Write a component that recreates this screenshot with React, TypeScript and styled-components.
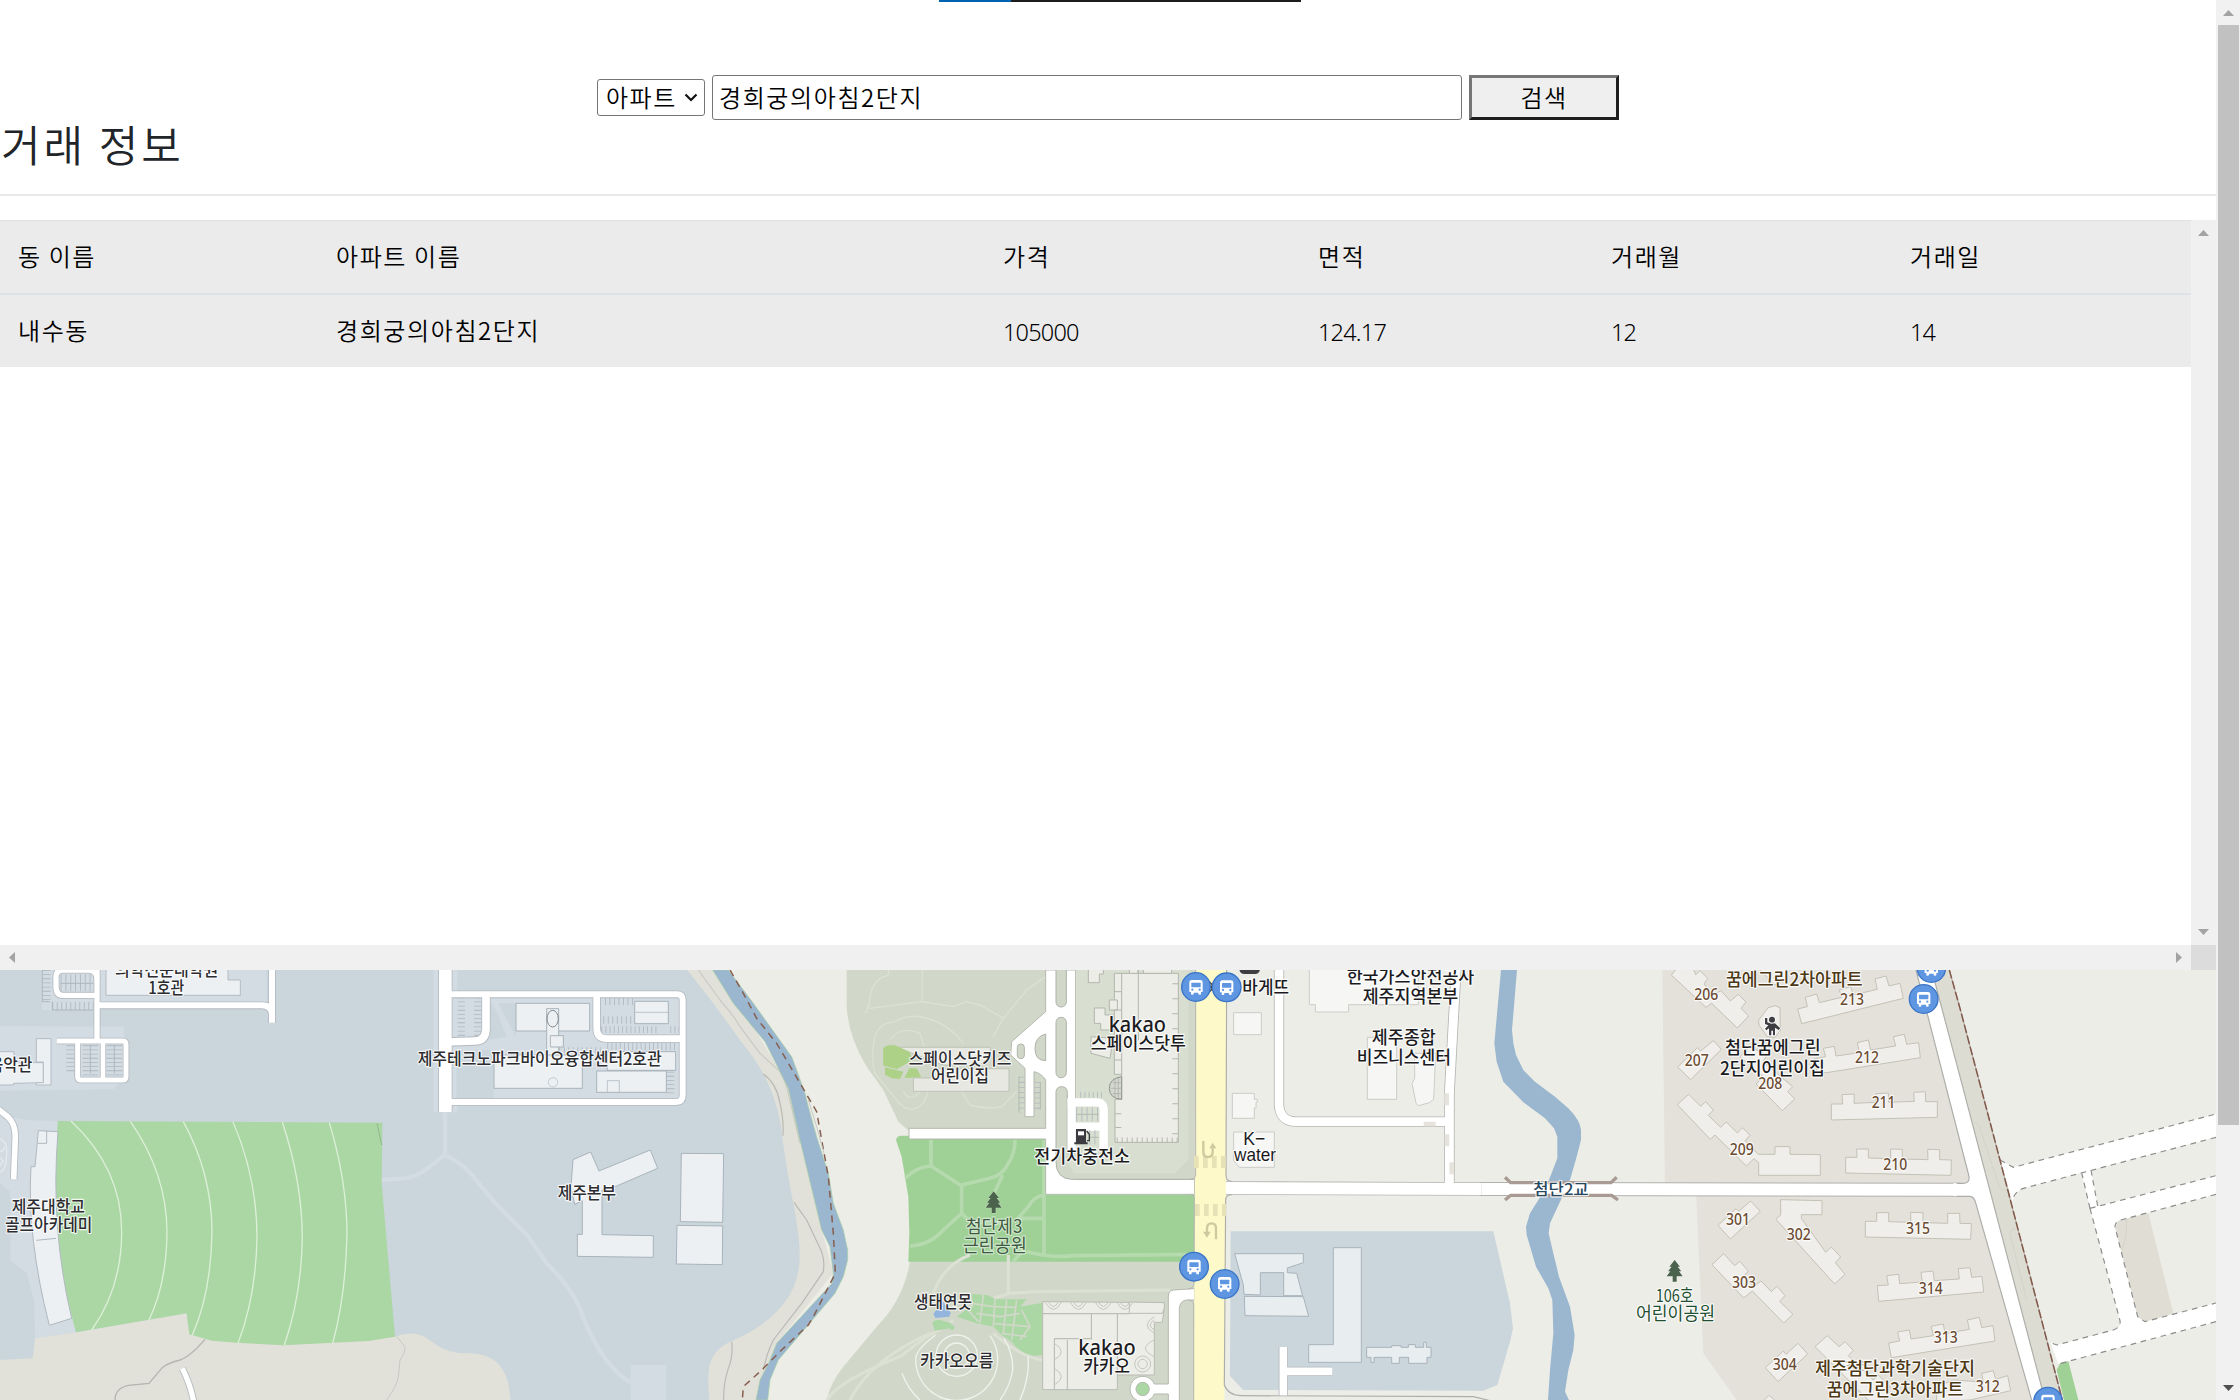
import React from "react";
import styled, { createGlobalStyle } from "styled-components";

const GlobalStyle = createGlobalStyle`
  * { box-sizing: border-box; }
  html, body { margin: 0; padding: 0; overflow: hidden; background: #fff; }
  body { font-family: "Noto Sans CJK KR", "Noto Sans", sans-serif; color: #212529; }
`;

const Window = styled.div`
  width: 2240px;
  height: 1400px;
  display: flex;
  overflow: hidden;
`;
const Page = styled.main`
  width: 2216px;
  display: flex;
  flex-direction: column;
`;
const Progress = styled.div`
  display: flex;
  width: 362px;
  height: 2px;
  margin-left: 939px;
  background: #1d1d1d;
`;
const ProgressFill = styled.div`
  width: 72px;
  background: #0063b1;
`;
const SearchForm = styled.form`
  display: flex;
  align-items: center;
  justify-content: center;
  gap: 7px;
  margin-top: 73px;
  height: 45px;
`;
const SelectBox = styled.div`
  display: flex;
  align-items: center;
  width: 108px;
  height: 37px;
  padding: 0 6px 0 8px;
  border: 1px solid #767676;
  border-radius: 3px;
  background: #fff;
`;
const Select = styled.select`
  appearance: none;
  flex: 1;
  min-width: 0;
  height: 35px;
  padding: 0 0 2px;
  border: 0;
  background: transparent;
  color: #000;
  font: 350 24px/33px "Noto Sans CJK KR", sans-serif;
  letter-spacing: 1.5px;
`;
const SearchInput = styled.input`
  width: 750px;
  height: 45px;
  padding: 0 6px 2px;
  border: 1px solid #767676;
  border-radius: 3px;
  outline: none;
  color: #000;
  font: 350 24px/41px "Noto Sans CJK KR", sans-serif;
  letter-spacing: 1.6px;
`;
const SearchButton = styled.button`
  width: 150px;
  height: 45px;
  padding: 0 0 2px;
  border: 3px solid;
  border-color: #767676 #1e1e1e #1e1e1e #767676;
  background: #efefef;
  color: #000;
  font: 350 24px/35px "Noto Sans CJK KR", sans-serif;
  letter-spacing: 1.5px;
`;
const Title = styled.h2`
  height: 74px;
  margin: 0;
  padding-left: 1px;
  font-size: 43px;
  font-weight: 350;
  line-height: 46px;
  letter-spacing: 3px;
`;
const Rule = styled.div`
  height: 2px;
  margin-bottom: 24px;
  background: #e9e9e9;
`;
const ScrollArea = styled.section`
  display: grid;
  grid-template-columns: 2191px 25px;
  grid-template-rows: 725px 25px;
`;
const Table = styled.div`
  background: #fff;
`;
const Row = styled.div<{ $last?: boolean }>`
  display: grid;
  grid-template-columns: 318px 667px 315px 293px 299px 299px;
  align-items: center;
  height: ${(p) => (p.$last ? 72 : 75)}px;
  background: #ebebeb;
  border-top: ${(p) => (p.$last ? "0" : "1px solid #dee2e6")};
  border-bottom: ${(p) => (p.$last ? "0" : "2px solid #dee2e6")};
`;
const Cell = styled.div<{ $numeric?: boolean }>`
  padding-left: 18px;
  color: #000;
  font: ${(p) =>
    p.$numeric ? '350 23.5px/36px "Noto Sans", sans-serif' : '350 24px/36px "Noto Sans CJK KR", sans-serif'};
  letter-spacing: ${(p) => (p.$numeric ? "-0.8px" : "1.6px")};
  padding-top: ${(p) => (p.$numeric ? 2 : 0)}px;
  padding-bottom: ${(p) => (p.$numeric ? 0 : 2)}px;
`;
const Bar = styled.div<{ $dir: "row" | "column" }>`
  display: flex;
  flex-direction: ${(p) => p.$dir};
  justify-content: space-between;
  align-items: center;
  padding: ${(p) => (p.$dir === "row" ? "0 9px" : "10px 0")};
  background: #f0f0f0;
`;
const Corner = styled.div`
  background: #dcdcdc;
`;
const PageBar = styled.div`
  display: flex;
  flex-direction: column;
  align-items: center;
  width: 24px;
  padding: 10px 0 9px;
  background: #f1f1f1;
`;
const Thumb = styled.div`
  width: 21px;
  height: 1100px;
  margin: 9px 0 260px 1px;
  background: #c1c1c1;
`;
const MapSvg = styled.svg`
  display: block;
  width: 2216px;
  height: 430px;
`;

const ARROWS = {
  up: [11, 6, "0,6 5.5,0 11,6"],
  down: [11, 6, "0,0 11,0 5.5,6"],
  left: [6, 11, "6,0 6,11 0,5.5"],
  right: [6, 11, "0,0 6,5.5 0,11"],
} as const;

const ArrowIcon = styled.svg`
  flex: none;
`;

function Arrow({ dir, color = "#a3a3a3" }: { dir: keyof typeof ARROWS; color?: string }) {
  const [w, h, pts] = ARROWS[dir];
  return (
    <ArrowIcon width={w} height={h}>
      <polygon points={pts} fill={color} />
    </ArrowIcon>
  );
}

/* ---------- map ---------- */

const CAMPUS = "#cad5dc";
const CAMPUS_LIGHT = "#d3dbe3";
const SAND = "#e2e1d9";
const LAND = "#ecede7";
const RIVER = "#9bb7cf";
const MEADOW = "#d1d8c9";
const PATHWAY = "#dce1d4";

/* Each sheet is surveyed at three units per map pixel. */
function Sheet({ x, y, children }: { x: number; y: number; children: React.ReactNode }) {
  return <g transform={`translate(${x} ${y}) scale(0.33333)`}>{children}</g>;
}

function Roads({ items, edge = "#b4bac0" }: { items: [string, number][]; edge?: string }) {
  return (
    <g fill="none" strokeLinejoin="round">
      {items.map(([d, w], i) => (
        <path key={`e${i}`} d={d} stroke={edge} strokeWidth={w + 5} />
      ))}
      {items.map(([d, w], i) => (
        <path key={`f${i}`} d={d} stroke="#fff" strokeWidth={w} />
      ))}
    </g>
  );
}

function Buildings({ items, fill, edge }: { items: string[]; fill: string; edge: string }) {
  return (
    <g fill={fill} stroke={edge} strokeWidth={3}>
      {items.map((p, i) => (
        <polygon key={i} points={p} />
      ))}
    </g>
  );
}

/* A run of parking bays: a thick line broken into thin ticks. */
function Bays({ d, w, gap = 10 }: { d: string; w: number; gap?: number }) {
  return <path d={d} fill="none" stroke="#aeb7be" strokeWidth={w} strokeDasharray={`2.5 ${gap}`} />;
}

type LabelSpec = [string, number, number, number];
function Labels({
  items,
  color = "#2c2c30",
  size = 51,
  weight = 500,
  halo = "#ffffffd0",
  font = '"Noto Sans CJK KR", sans-serif',
}: {
  items: LabelSpec[];
  color?: string;
  size?: number;
  weight?: number;
  halo?: string;
  font?: string;
}) {
  return (
    <g
      fill={color}
      stroke={halo}
      strokeWidth={7}
      strokeLinejoin="round"
      paintOrder="stroke"
      fontFamily={font}
      fontSize={size}
      fontWeight={weight}
    >
      {items.map(([text, left, right, base], i) => (
        <text key={i} x={left} y={base} textLength={right - left} lengthAdjust="spacingAndGlyphs">
          {text}
        </text>
      ))}
    </g>
  );
}

function BusStop({ x, y }: { x: number; y: number }) {
  return (
    <g transform={`translate(${x} ${y})`}>
      <circle r={43} fill="#5f96e2" stroke="#3a74c6" strokeWidth={4} />
      <path
        d="M-13,-21 H13 Q20,-21 20,-13 V15 H15 V21 Q15,23 11,23 Q7,23 7,21 V17 H-7 V21 Q-7,23 -11,23 Q-15,23 -15,21 V15 H-20 V-13 Q-20,-21 -13,-21z"
        fill="#fff"
      />
      <rect x={-14} y={-13} width={28} height={14} rx={2} fill="#5f96e2" />
      <circle cx={-11} cy={8} r={3.4} fill="#5f96e2" />
      <circle cx={11} cy={8} r={3.4} fill="#5f96e2" />
    </g>
  );
}

function Tree({ x, y, color = "#4b634d" }: { x: number; y: number; color?: string }) {
  return (
    <path
      transform={`translate(${x} ${y})`}
      d="M0,0 L16,20 H9 L20,34 H13 L24,49 H6 V65 H-6 V49 H-24 L-13,34 H-20 L-9,20 H-16z"
      fill={color}
      stroke="#ffffff60"
      strokeWidth={3}
      paintOrder="stroke"
    />
  );
}

function WestTerrain() {
  return (
    <>
      <Sheet x={400} y={940}>
        <path d="M-1200,90 H960 L1170,445 L1265,870 L1300,1000 L1130,1210 L1075,1380 H-1200z" fill={SAND} />
        <path
          d="M-1200,90 H862 L940,190 L1020,300 Q1075,370 1095,410 Q1140,500 1148,600 Q1165,720 1182,800 Q1200,900 1199,950 Q1198,1030 1155,1085 Q1100,1160 995,1203 Q935,1230 927,1285 Q922,1330 928,1380 H-1200z"
          fill={CAMPUS}
        />
        <g fill="none" stroke="#b9b9b4" strokeWidth={3.5}>
          <path d="M895,90 L960,180 Q1000,225 1020,260 L1080,340 L1140,395 Q1160,430 1167,470 L1200,610" stroke="#c9c9c3" />
          <path d="M1090,402 Q1130,430 1140,490 Q1152,540 1149,587" />
          <path d="M1182,787 L1220,840 L1265,935 Q1275,965 1270,995 L1205,1090 L1120,1200 Q1100,1240 1090,1290" />
          <path d="M995,1205 Q1000,1250 985,1285 Q970,1330 971,1380" />
        </g>
        <path
          d="M938,90 L1000,190 L1095,305 L1165,445 L1200,600 L1265,870 L1290,920 L1300,1000 L1296,1030 L1130,1210 L1108,1265 L1080,1320 L1068,1380 H1103 L1110,1320 L1135,1260 L1220,1160 L1305,1060 L1330,1010 L1343,960 V930 L1330,870 L1300,790 L1285,700 L1250,590 L1225,500 L1215,460 L1190,390 L1175,350 L1060,190 L985,90z"
          fill={RIVER}
          stroke="#a8cfa3"
          strokeWidth={2}
        />
        <path
          d="M990,90 L1030,160 L1070,235 L1130,310 L1215,455 L1250,515 L1265,600 L1285,710 L1300,880 L1306,1000 L1240,1130 L1225,1155 L1150,1225 L1080,1295 L1030,1340 L1027,1380"
          fill="none"
          stroke="#875f50"
          strokeWidth={4.5}
          strokeDasharray="21 16"
        />
        <path d="M1225,480 L1250,560 L1272,640" fill="none" stroke="#c5c8c0" strokeWidth={3} />
        <g fill="none" stroke={CAMPUS_LIGHT} strokeWidth={13}>
          <path d="M135,517 V643 L90,680 Q40,718 0,716 L-55,720" />
          <path d="M135,645 Q200,675 240,735 Q300,810 380,883 L440,970 Q530,1060 548,1130 Q610,1280 692,1328" />
        </g>
        <rect x={692} y={1275} width={107} height={105} fill={CAMPUS_LIGHT} />
        <rect x={100} y={90} width={72} height={427} fill={CAMPUS_LIGHT} />
        <rect x={157} y={172} width={682} height={303} fill={CAMPUS_LIGHT} />
        <path d="M170,330 H280 V474 H170z M272,188 L290,215 320,290 260,300z M295,190 H348 V290z" fill={CAMPUS} />
        <Bays d="M184,172 V290" w={22} />
        <Bays d="M233,172 V290" w={22} />
        <Bays d="M615,184 H700" w={22} gap={11} />
        <Bays d="M610,240 H700" w={22} gap={11} />
        <Bays d="M604,269 H778" w={20} />
        <Bays d="M811,269 H837" w={20} />
        <Bays d="M622,320 H830" w={22} />
        <Bays d="M811,395 V466" w={24} />
        <Bays d="M478,330 H610" w={16} gap={11} />
        <Buildings
          fill="#ecf0f3"
          edge="#a9b3bb"
          items={[
            "348,190 569,190 569,273 348,273",
            "440,206 476,206 476,345 440,345",
            "451,287 490,287 490,321 451,321",
            "282,345 547,345 547,445 282,445",
            "704,184 805,184 805,251 704,251",
            "622,335 827,335 827,391 622,391",
            "590,393 799,393 799,457 590,457",
            "519,659 572,636 597,693 751,630 773,685 650,738 606,750 606,884 760,887 760,952 532,949 532,883 547,883 547,782 524,793 513,740",
            "844,640 971,641 968,847 841,845",
            "831,856 968,858 967,974 829,972",
          ]}
        />
        <ellipse cx={458} cy={236} rx={17} ry={25} fill="none" stroke="#7d858b" strokeWidth={3} />
        <circle cx={459} cy={427} r={14} fill="none" stroke="#c2c9ce" strokeWidth={3} />
        <path d="M704,217 H805 M622,457 V422 H658 V457" fill="none" stroke="#bcc4ca" strokeWidth={3} />
        <Roads
          items={[
            ["M136,80 V516", 38],
            ["M136,163 H832 Q848,163 848,180 V466 Q848,486 828,486 H136", 18],
            ["M258,166 V270 Q255,303 225,303 L136,306", 23],
            ["M590,166 V265 Q590,296 620,296 H848", 20],
          ]}
        />
      </Sheet>
      <Sheet x={0} y={920}>
        <path d="M0,318 L372,320 V470 L340,508 L0,512z" fill={CAMPUS_LIGHT} />
        <path
          d="M0,585 L80,600 L175,603 L228,1237 L105,1255 L103,1145 L80,1060 L32,1022 L30,815 L0,790z"
          fill={CAMPUS_LIGHT}
        />
        <path
          d="M0,1320 L98,1315 L105,1255 L228,1237 L560,1180 L568,1243 L850,1276 L1185,1250 Q1250,1225 1295,1265 Q1340,1300 1400,1300 Q1500,1295 1525,1390 L1532,1440 H0z"
          fill={SAND}
        />
        <path
          d="M173,603 L1147,608 L1145,790 L1185,1250 L1105,1263 L850,1276 L710,1268 L635,1262 L568,1243 L560,1180 L228,1237 Q150,950 165,800z"
          fill="#abd7a4"
        />
        <g fill="none" stroke="#dcefd8" strokeWidth={4}>
          <path d="M213,603 Q365,745 365,935 Q365,1105 275,1230" />
          <path d="M391,604 Q500,760 501,935 Q500,1090 447,1200" />
          <path d="M550,605 Q635,760 636,935 Q633,1120 577,1245" />
          <path d="M699,606 Q770,770 771,950 Q768,1130 714,1270" />
          <path d="M847,607 Q905,780 907,950 Q904,1130 853,1275" />
          <path d="M988,608 Q1040,780 1041,940 Q1037,1130 998,1270" />
        </g>
        <path d="M1131,610 L1145,675" stroke="#8fb88a" strokeWidth={3} />
        <g fill="#ecf0f3" stroke="#b0b9c0" strokeWidth={3}>
          <path d="M115,632 L174,635 Q150,920 215,1195 L148,1216 Q80,950 93,740 L105,740z" />
          <path d="M109,961 L168,955 M140,632 V670 H113" fill="none" />
        </g>
        <g fill="none" stroke="#b4b4b0" strokeWidth={4}>
          <path d="M615,1258 Q570,1310 540,1320 Q500,1330 485,1345 L447,1390 L385,1396 Q345,1405 345,1440" />
          <path d="M1190,1250 L1215,1280 Q1217,1295 1200,1320 L1195,1370 Q1190,1400 1160,1440" stroke="#c8c8c3" strokeWidth={3} />
        </g>
        <g fill="none" stroke="#e6eaee" strokeWidth={4}>
          <path d="M0,656 Q20,665 20,690 Q20,755 0,755 M0,694 Q12,695 14,680 M0,712 L10,724 L0,736" />
        </g>
        <rect x={300} y={150} width={500} height={100} fill={CAMPUS_LIGHT} />
        <rect x={126} y={150} width={160} height={120} fill={CAMPUS_LIGHT} />
        <Bays d="M140,150 V245" w={24} />
        <Bays d="M157,258 H280" w={24} gap={11} />
        <Bays d="M182,188 H280" w={50} gap={12} />
        <Bays d="M211,376 V460" w={24} />
        <Bays d="M271,376 V470" w={46} />
        <Bays d="M343,376 V470" w={46} />
        <path d="M182,190 H280 M271,376 V460 M343,376 V460 M127,150 V245 H150 M157,245 V270 H280" stroke="#aeb7be" strokeWidth={3} fill="none" />
        <Buildings
          fill="#ecf0f3"
          edge="#b4bdc4"
          items={[
            "318,140 318,226 721,226 721,180 684,180 684,140",
            "-5,395 42,395 42,428 130,428 130,488 40,490 40,495 -5,495",
            "109,356 153,356 153,495 109,495 109,488 130,488 130,426 109,426",
          ]}
        />
        <Roads
          items={[
            ["M291,140 V363", 16],
            ["M291,256 H785 Q816,256 816,285 M816,140 V308", 18],
            ["M291,226 H190 Q168,226 168,200 V170 Q168,150 190,150 H262 Q291,150 291,175", 16],
            ["M170,363 H368 Q378,363 378,373 V470 Q378,480 368,480 H243 Q233,480 233,470 V363", 15],
            ["M309,363 V480", 14],
            ["M-5,568 L25,592 Q46,612 46,650 L41,778", 17],
            ["M547,1345 Q572,1395 581,1445", 16],
          ]}
        />
      </Sheet>
    </>
  );
}

function KakaoDistrict() {
  return (
    <Sheet x={820} y={940}>
      <path
        d="M80,90 V200 Q85,290 140,380 L190,450 L235,545 L270,575 V965 Q250,1080 170,1160 L70,1280 Q30,1330 20,1380 H1125 V90z"
        fill={MEADOW}
      />
      <g fill="none" stroke={PATHWAY} strokeWidth={4}>
        <path d="M205,90 Q210,110 190,110 Q150,130 148,190 L138,220 M148,205 L307,185 L400,200 L440,185 L480,195 L550,235 L620,150 L677,110 M307,90 V185 M550,235 L520,290" />
        <path d="M225,245 Q280,210 360,250 Q400,270 430,310 M165,290 Q175,250 225,245 M165,290 Q150,350 165,400 L230,480 Q270,530 310,490 L325,455 M210,300 Q240,255 300,280 L312,320" />
        <path d="M425,455 L450,495 Q500,510 545,500 L590,455 M250,455 Q270,490 300,455" />
      </g>
      <path
        d="M228,600 Q230,587 245,587 H677 V765 H1124 V965 H265 L268,880 L265,770 L245,650z"
        fill="#9fd096"
      />
      <g fill="none" stroke="#b5daae" strokeWidth={11} strokeLinejoin="round">
        <path d="M333,600 V678 Q290,680 256,715 M333,678 L425,738 L425,820 L370,870 Q330,915 270,918 M425,735 L510,715 Q550,705 565,670 Q585,640 585,600 M548,705 L520,765 M425,820 L450,845 L565,850" />
        <path d="M672,600 V950 M672,765 Q640,770 625,800 L590,840 M600,835 H672 M620,935 Q700,955 760,947 L1122,943 M580,965 L610,930" />
      </g>
      <g fill="none" stroke={PATHWAY} strokeWidth={9}>
        <path d="M565,945 V1060 M450,945 Q370,975 340,1060 M520,1075 L570,1060 L640,1055 L1050,1050 M400,1140 Q380,1160 320,1190 L240,1250 Q60,1320 20,1380 M330,1180 Q150,1260 90,1380 M520,1180 Q600,1250 667,1260" />
      </g>
      <path d="M190,325 Q205,310 235,320 L268,335 L278,360 L230,387 L190,376z M195,382 L250,395 L240,417 L215,415 L195,404z M253,414 L268,385 L290,385 L304,412z" fill="#add287" />
      <Buildings
        fill="#e6e8e1"
        edge="#bfc3b9"
        items={["230,322 511,322 511,345 480,375 370,375 290,345", "280,414 335,414 335,386 567,386 567,454 280,454"]}
      />
      <path d="M190,325 Q205,310 235,320 L268,335 L278,360 L230,387 L190,376z" fill="#add287" />
      {/* pond gardens */}
      <path
        d="M455,1062 L500,1065 L530,1078 L620,1078 L600,1100 L668,1088 V1245 L640,1247 Q600,1240 575,1205 L545,1185 L520,1160 L470,1150 L410,1130 L440,1108 L460,1100z M337,1150 Q340,1138 360,1140 L395,1150 L390,1165 L345,1172z"
        fill="#abd7a4"
      />
      <g fill="none" stroke={MEADOW} strokeWidth={5}>
        <path d="M455,1090 L520,1100 L590,1102 M470,1120 L540,1130 L600,1120 M490,1065 L480,1150 M525,1075 L520,1160 M560,1080 L550,1180 M590,1080 L575,1200 M520,1150 L630,1160 M545,1180 L620,1190 M605,1110 L630,1160 L600,1200 M440,1105 L475,1145" />
      </g>
      <path d="M340,1122 L368,1083 L392,1118 L388,1130 L346,1134z" fill="#93b5dd" />
      <circle cx={396} cy={1163} r={7} fill="#abd7a4" />
      <g fill="none" stroke="#f0f2ec" strokeWidth={4}>
        <circle cx={410} cy={1247} r={38} />
        <circle cx={410} cy={1247} r={62} />
        <path d="M347,1185 Q285,1230 287,1260 A123,123 0 1 0 510,1187" />
        <path d="M246,1300 Q265,1350 300,1380 M552,1195 Q580,1240 578,1290 Q570,1340 540,1380 M624,1250 Q630,1310 600,1380" />
      </g>
      {/* roads */}
      <path
        d="M677,90 H767 V718 H1124 V763 H677 V597 H267 V565 H677 V420 Q665,400 642,395 V530 H615 V385 L572,345 L575,305 L677,215z"
        fill="#fff"
        stroke="#b5b9b0"
        strokeWidth={3}
      />
      <path
        d="M767,85 H1127 V705 Q1127,717 1112,718 H755 Q708,716 708,665 V455 Q710,440 725,440 Q742,440 742,458 V640 H767z"
        fill={MEADOW}
        stroke="#aeb3a9"
        strokeWidth={3}
      />
      <path d="M767,90 H1105 V660 L1065,700 H760 L742,660 H767z" fill="#d8dfd0" />
      <g fill={MEADOW} stroke="#aeb3a9" strokeWidth={3}>
        <rect x={708} y={60} width={31} height={141} rx={15} />
        <rect x={708} y={232} width={31} height={181} rx={15} />
        <path d="M677,282 Q645,290 645,325 Q645,362 677,362z" />
        <rect x={592} y={312} width={21} height={44} rx={10} />
      </g>
      <path d="M755,475 V640 M742,487 H830 Q851,487 851,510 V632 M767,560 H851" fill="none" stroke="#fff" strokeWidth={25} />
      <Bays d="M605,410 V518" w={18} gap={13} />
      <Bays d="M652,426 V508" w={18} gap={13} />
      <Bays d="M781,464 H848" w={18} />
      <Bays d="M769,523 H836" w={42} gap={13} />
      <Bays d="M808,592 H836" w={42} gap={13} />
      <path d="M769,523 H836 M808,592 H836 M597,410 V518 M661,426 V508" stroke="#b5b9b0" strokeWidth={3} />
      <Buildings
        fill="#ecede7"
        edge="#b3b6ae"
        items={[
          "883,100 1075,100 1075,607 885,607 885,478 905,478 905,403 883,403",
          "805,80 850,80 850,102 838,102 838,128 805,128",
          "868,180 892,180 892,210 868,210",
          "823,204 855,204 855,225 880,225 880,270 842,270 842,250 823,250",
          "813,290 880,295 870,355 813,340",
          "928,80 954,80 954,100 928,100",
          "970,80 1055,80 1055,100 970,100",
        ]}
      />
      <g fill="none" stroke="#b3b6ae" strokeWidth={3}>
        <path d="M905,100 V403 M955,90 V300 M883,155 H905 M883,210 H905 M883,315 H905 M883,360 H905" />
        <path d="M1066,130 V600" strokeWidth={18} strokeDasharray="3 42" />
        <path d="M895,520 V600" strokeWidth={18} strokeDasharray="3 38" />
        <path d="M890,600 H1075" strokeWidth={15} strokeDasharray="3 12" />
      </g>
      <path d="M905,410 Q868,415 868,445 Q868,475 905,478z" fill="#d5d8d0" stroke="#8f938c" strokeWidth={3} />
      <path d="M873,445 H905 M878,428 H905 M878,461 H905 M885,415 V473 M895,412 V477" stroke="#a5a9a1" strokeWidth={2} />
      {/* headquarters */}
      <Buildings
        fill="#ecede7"
        edge="#b9bcb4"
        items={[
          "668,1085 1033,1088 1033,1105 1027,1147 1003,1147 1003,1305 892,1305 892,1349 668,1349",
          "928,1086 1033,1088 1033,1105 1027,1120 928,1120",
        ]}
      />
      <g fill="none" stroke="#b3b6ae" strokeWidth={3}>
        <path d="M668,1121 H928 M892,1121 V1305 M814,1121 V1198 M703,1349 V1196 H814 M742,1200 V1349" />
        {[700, 775, 850, 915].map((x) => (
          <g key={x} stroke="#c3c6be">
            <path d={`M${x - 24},1087 Q${x},1130 ${x + 24},1087 M${x - 14},1087 Q${x},1112 ${x + 14},1087`} />
          </g>
        ))}
        <path d="M1003,1130 Q960,1155 1003,1180 M1003,1140 Q978,1155 1003,1170 M1003,1200 Q950,1225 1003,1250 M703,1210 Q745,1235 703,1260 M703,1285 Q745,1310 703,1335" stroke="#c3c6be" />
        <circle cx={968} cy={1272} r={24} stroke="#c3c6be" />
        <circle cx={968} cy={1272} r={14} stroke="#c3c6be" />
      </g>
      <path
        d="M1124,1046 L1060,1050 Q1045,1052 1045,1070 V1332 H1003 A38,38 0 1 0 1003,1362 H1045 V1382 H1078 V1105 Q1080,1082 1100,1080 H1124z"
        fill="#fff"
        stroke="#b5b9b0"
        strokeWidth={3}
      />
      <circle cx={968} cy={1347} r={20} fill="#abd7a4" stroke="#b5b9b0" strokeWidth={3} />
      <g fill="#3b3b40">
        <path d="M768,567 H798 V607 H803 V613 H763 V607 H768z" />
        <path d="M800,573 L808,583 V602 H801" fill="none" stroke="#3b3b40" strokeWidth={4} />
        <rect x={774} y={574} width={18} height={12} fill="#fff" />
      </g>
      <Tree x={521} y={754} />
    </Sheet>
  );
}

function MidDistrict() {
  const block = { fill: "#f6f7f5", edge: "#cbccc7" };
  return (
    <Sheet x={1180} y={940}>
      <path d="M152,874 H940 L990,1090 L999,1165 L990,1205 L952,1335 L910,1352 L190,1350 L150,1308z" fill={CAMPUS} />
      <Roads
        edge="#b5b6b3"
        items={[
          ["M297,80 V495 Q300,545 350,545 H807", 26],
          ["M829,80 L808,460 V745", 27],
          ["M130,744 L905,747", 36],
        ]}
      />
      <path d="M793,460 h14 v36 h-14z M794,583 h14 v36 h-14z M808,667 h14 v36 h-14z M731,545 h36 v14 h-36z" fill="#e6e3dc" />
      <path d="M47,90 H140 L138,700 L133,1380 H41 L45,700z" fill="#fdf9c9" />
      <path
        d="M140,90 L138,705 Q138,724 155,724 M155,764 Q137,764 137,782 L133,1335 Q145,1367 185,1367 L880,1370 L930,1382"
        fill="none"
        stroke="#adaea9"
        strokeWidth={3.5}
      />
      <path d="M47,90 V705 Q45,718 30,718 M30,763 Q43,764 43,778 L42,1030 Q40,1046 25,1046 M25,1080 Q41,1082 41,1095 V1380" fill="none" stroke="#b5b6b3" strokeWidth={3} />
      <g fill="none" stroke="#e7e1b6" strokeWidth={36} strokeDasharray="14 13">
        <path d="M42,666 H138" />
        <path d="M45,810 H138" />
      </g>
      <g stroke="#cfc99f" strokeWidth={7} fill="none">
        <path d="M70,603 V635 Q70,651 84,651 Q98,651 98,635 V622" />
        <path d="M108,898 V865 Q108,850 95,850 Q81,850 81,865 V878" />
        <path d="M88,625 L98,608 L109,625z M69,875 L81,893 L92,875z" fill="#cfc99f" stroke="none" />
      </g>
      <Buildings
        {...block}
        items={[
          "161,218 244,218 244,284 161,284",
          "157,460 223,460 223,478 232,478 232,486 228,488 228,504 223,504 223,535 157,535",
          "161,576 283,576 283,682 178,682 161,662",
          "388,80 388,194 406,194 406,216 506,216 506,194 715,194 715,80",
          "562,292 650,292 650,478 562,478",
          "704,340 767,340 761,478 748,488 716,497 708,490 696,430 704,415",
        ]}
      />
      <Buildings
        fill="#e8edf0"
        edge="#a9b3bb"
        items={[
          "164,941 370,941 370,968 322,984 322,998 350,1000 368,1067 311,1067 311,998 241,998 241,1065 192,1063 190,1035",
          "193,1069 370,1070 386,1129 195,1127",
          "460,923 544,923 544,1267 386,1267 386,1214 460,1214",
          "560,1222 635,1222 635,1217 663,1217 663,1222 685,1222 685,1214 706,1214 706,1222 731,1222 731,1207 739,1207 739,1222 753,1222 753,1252 741,1252 741,1270 686,1270 686,1252 658,1252 658,1270 635,1270 635,1252 582,1252 582,1267 573,1267 573,1252 560,1252",
        ]}
      />
      <Roads
        items={[
          ["M310,1221 V1366", 23],
          ["M310,1294 H457", 23],
        ]}
      />
      <path d="M178,88 H240 Q238,102 225,102 H193 Q180,102 178,88z" fill="#3e3e42" />
      <path d="M88,125 L102,140 L88,156 M104,125 L94,140 L104,156" stroke="#333" strokeWidth={4} fill="none" />
    </Sheet>
  );
}

function EastTerrain() {
  return (
    <>
      <Sheet x={1660} y={940}>
        <polygon points="7,90 15,748 108,748 130,1240 230,1380 1130,1380 940,740 775,90" fill="#e3e1d9" />
        <polygon points="815,90 868,90 1020,660 1205,1380 1150,1380" fill="#dcdcd2" />
      </Sheet>
      <Sheet x={1480} y={940}>
        <path
          d="M63,90 L43,310 L50,365 L70,425 L130,487 L195,535 L222,565 L232,590 V655 L205,725 L175,780 L150,820 L138,860 L140,885 L168,980 L205,1045 L217,1080 L220,1180 L210,1290 L204,1380 H267 L255,1355 L265,1290 L280,1230 L284,1185 L270,1100 L237,1010 L220,940 L206,880 L210,850 L245,775 L270,720 L290,650 L303,600 V570 Q300,540 265,505 L225,470 L165,425 L130,390 L108,345 L100,310 L96,270 L111,90z"
          fill={RIVER}
        />
        <path d="M0,747 L1440,749" stroke="#b1b1ad" strokeWidth={42} />
        <path d="M0,747 L1440,749" stroke="#fff" strokeWidth={36} />
        <g fill="none" stroke="#a99b93" strokeWidth={10}>
          <path d="M75,712 L92,728 H393 L410,712" />
          <path d="M75,780 L92,766 H395 L414,780" />
        </g>
        <Tree x={584} y={960} />
      </Sheet>
      <Sheet x={1660} y={940}>
        <path d="M768,90 L926,705 Q932,727 910,729 L880,730 V768 L930,769 Q941,770 946,785 L1115,1380 H1155 L900,410 L815,90z" fill="#fff" />
        <path
          d="M768,90 L926,705 Q932,729 910,730 H890 M890,769 H930 Q941,770 946,785 L1115,1380 M815,90 L900,410 L1155,1380"
          fill="none"
          stroke="#adaea9"
          strokeWidth={3.5}
        />
        <Buildings
          fill="#efeeea"
          edge="#c4c1b6"
          items={[
            "34,105 50,86 100,86 107,104 120,92 143,115 132,132 160,165 183,152 211,183 235,163 258,186 243,205 266,228 232,264 155,190 138,202",
            "290,80 380,80 376,115 345,135",
            "345,197 360,203 361,270 345,292 322,290 297,255 296,240 325,203",
            "413,207 442,200 436,172 470,162 478,188 545,172 538,150 572,140 580,165 652,148 645,117 678,108 687,138 720,130 730,175 425,251",
            "463,357 497,350 490,325 523,319 528,348 598,338 592,308 625,300 632,330 707,318 700,290 733,283 740,313 776,308 781,353 500,398 470,395",
            "514,492 548,492 546,464 583,462 582,490 648,487 648,461 685,459 686,487 763,484 761,457 796,455 797,485 832,485 832,532 514,540",
            "557,652 591,652 590,627 625,627 625,654 692,656 692,627 727,628 727,657 804,659 803,628 839,629 839,659 874,660 873,706 557,699",
            "52,494 86,463 122,499 137,485 160,510 145,526 182,562 199,546 232,579 248,563 270,586 255,602 295,643 345,643 345,620 390,620 390,643 481,644 481,706 296,706 296,668 282,656 259,678 165,585 151,598",
            "53,381 112,323 122,333 160,302 184,328 92,419",
            "240,350 270,320 320,345 310,365 398,440 383,455 404,477 367,512 288,432 310,410",
            "174,856 228,806 236,814 272,783 301,814 211,897",
            "362,779 486,782 486,824 424,824 424,835 497,937 514,921 542,951 526,968 555,1003 524,1032 348,838 362,825",
            "156,974 191,941 224,977 239,964 265,993 250,1010 282,1040 303,1023 334,1055 351,1039 375,1067 359,1084 399,1123 371,1149 277,1053 251,1074",
            "616,844 650,844 650,818 686,818 686,845 752,847 752,817 789,818 789,848 863,850 863,820 899,820 900,850 934,851 932,898 616,891",
            "652,1037 685,1035 680,1007 716,1003 719,1031 787,1026 783,997 819,993 823,1022 898,1017 895,986 930,983 935,1012 966,1009 971,1056 656,1084",
            "686,1209 719,1203 713,1176 748,1170 753,1197 820,1187 814,1159 850,1152 855,1181 928,1168 922,1140 958,1132 965,1163 999,1157 1005,1203 694,1253",
            "830,1340 880,1320 970,1326 965,1300 1000,1292 1007,1318 1043,1307 1052,1352 930,1380 830,1385",
            "316,1283 370,1233 378,1243 414,1210 443,1242 354,1325",
            "465,1220 502,1187 537,1220 555,1205 580,1231 565,1247 600,1283 640,1320 655,1305 690,1340 670,1385 630,1385",
            "308,1385 327,1366 350,1385",
          ]}
        />
        <g fill="#3e3e42" stroke="#fff" strokeWidth={4} paintOrder="stroke">
          <circle cx={336} cy={239} r={9} />
          <path d="M315,234 H322 V247 L334,251 L345,250 L361,265 L356,270 L345,263 V286 H339 V272 H334 V286 H327 V265 L319,271 L315,266 L325,256 L315,252z" />
        </g>
      </Sheet>
      <Sheet x={1960} y={900}>
        <path
          d="M120,780 L160,802 L768,642 V712 L393,810 L413,918 L768,827 V883 L475,962 Q462,972 466,985 L533,1250 L555,1265 L768,1209 V1266 L295,1392 L272,1328 L290,1335 L462,1290 Q485,1280 480,1262 L390,925 L365,818 L190,865 Q165,872 158,905z"
          fill="#fff"
        />
        <polygon points="475,962 565,940 640,1240 555,1265 533,1250 466,985" fill="#dfddd4" />
        <path d="M290,1410 L300,1390 L325,1384 L355,1500 H312z" fill="#9fd096" />
        <g fill="none" stroke="#8c8c8a" strokeWidth={3.5} strokeDasharray="17 14">
          <path d="M120,780 L160,802 L768,642 M768,712 L190,865 Q170,872 160,892 M365,818 L390,925 M393,810 L413,918 M390,925 L768,827 M768,883 L475,962 Q462,972 466,985 L533,1250 L555,1265 L768,1209 M390,925 L480,1262 Q483,1282 460,1290 L290,1335 L272,1328 M768,1265 L295,1392" />
        </g>
        <g fill="none" stroke="#cfcfc6" strokeWidth={2}>
          <path d="M42,670 Q55,665 60,685 L118,860 Q125,875 140,868 M165,985 Q145,990 152,1010 L200,1200 M500,955 Q502,1010 485,1050" />
        </g>
        <path d="M-32,210 L0,325 L120,780 L307,1500" fill="none" stroke="#a9a29b" strokeWidth={3} />
        <path d="M-32,210 L0,325 L120,780 L307,1500" fill="none" stroke="#83594c" strokeWidth={4.5} strokeDasharray="26 8" />
      </Sheet>
    </>
  );
}

function MapLabels() {
  const latin = '"Noto Sans", sans-serif';
  return (
    <>
      <Sheet x={0} y={920}>
        <Labels
          items={[
            ["의학전문대학원", 345, 655, 169],
            ["1호관", 445, 553, 223],
            ["음악관", -34, 97, 453],
            ["제주대학교", 35, 255, 878],
            ["골프아카데미", 15, 277, 932],
          ]}
        />
      </Sheet>
      <Sheet x={400} y={940}>
        <Labels
          items={[
            ["제주테크노파크바이오융합센터2호관", 53, 785, 374],
            ["제주본부", 473, 648, 776],
          ]}
        />
      </Sheet>
      <Sheet x={820} y={940}>
        <Labels
          items={[
            ["스페이스닷키즈", 266, 574, 374],
            ["어린이집", 333, 507, 427],
            ["생태연못", 282, 456, 1104],
            ["카카오오름", 300, 520, 1281],
          ]}
        />
        <Labels
          size={54}
          color="#1b1b1f"
          items={[
            ["스페이스닷투", 812, 1098, 330],
            ["전기차충전소", 643, 930, 670],
            ["카카오", 790, 930, 1298],
          ]}
        />
        <Labels size={64} font={latin} color="#1b1b1f" items={[["kakao", 866, 1038, 277], ["kakao", 775, 947, 1245]]} />
        <Labels
          size={54}
          weight={400}
          color="#3d5a42"
          halo="#ffffff80"
          items={[
            ["첨단제3", 438, 607, 879],
            ["근린공원", 428, 620, 937],
          ]}
        />
      </Sheet>
      <Sheet x={1180} y={940}>
        <Labels
          size={54}
          color="#1b1b1f"
          items={[
            ["한국가스안전공사", 500, 883, 129],
            ["제주지역본부", 548, 835, 189],
            ["제주종합", 575, 767, 312],
            ["비즈니스센터", 530, 813, 372],
            ["바게뜨", 187, 327, 162],
          ]}
        />
        <Labels
          size={56}
          color="#1b1b1f"
          font='"Liberation Sans", sans-serif'
          weight={400}
          items={[
            ["K−", 190, 256, 615],
            ["water", 162, 288, 664],
          ]}
        />
        <BusStop x={48} y={141} />
        <BusStop x={140} y={142} />
        <BusStop x={42} y={980} />
        <BusStop x={134} y={1032} />
      </Sheet>
      <Sheet x={1480} y={940}>
        <Labels size={48} color="#27475f" items={[["첨단2교", 160, 326, 766]]} />
        <Labels
          size={53}
          weight={400}
          color="#1f4f31"
          items={[
            ["106호", 527, 640, 1086],
            ["어린이공원", 468, 705, 1139],
          ]}
        />
      </Sheet>
      <Sheet x={1660} y={940}>
        <Labels
          size={47}
          color="#6a4a30"
          font={latin}
          items={[
            ["206", 103, 175, 181],
            ["207", 74, 146, 377],
            ["208", 295, 367, 448],
            ["209", 209, 281, 645],
            ["210", 670, 742, 690],
            ["211", 635, 706, 505],
            ["212", 585, 657, 368],
            ["213", 540, 612, 195],
            ["301", 198, 270, 856],
            ["302", 380, 452, 901],
            ["303", 216, 288, 1043],
            ["304", 338, 410, 1290],
            ["312", 947, 1019, 1356],
            ["313", 821, 893, 1210],
            ["314", 776, 848, 1063],
            ["315", 738, 810, 881],
          ]}
        />
        <Labels size={44} color="#8d7a6699" font={latin} items={[["305", 553, 620, 1292]]} />
        <Labels
          size={54}
          color="#4c3814"
          items={[
            ["꿈에그린2차아파트", 198, 608, 139],
            ["제주첨단과학기술단지", 465, 945, 1305],
            ["꿈에그린3차아파트", 500, 910, 1368],
          ]}
        />
        <Labels
          size={54}
          color="#1b1b1f"
          items={[
            ["첨단꿈에그린", 195, 482, 343],
            ["2단지어린이집", 180, 495, 406],
          ]}
        />
        <BusStop x={814} y={84} />
        <BusStop x={791} y={177} />
        <BusStop x={1164} y={1385} />
      </Sheet>
    </>
  );
}

function MapView() {
  return (
    <MapSvg viewBox="0 970 2216 430">
      <rect x={0} y={970} width={2216} height={430} fill={LAND} />
      <WestTerrain />
      <KakaoDistrict />
      <EastTerrain />
      <MidDistrict />
      <MapLabels />
    </MapSvg>
  );
}

const HEAD = ["동 이름", "아파트 이름", "가격", "면적", "거래월", "거래일"];
const DEAL = ["내수동", "경희궁의아침2단지", "105000", "124.17", "12", "14"];

export default function App() {
  return (
    <>
      <GlobalStyle />
      <Window>
        <Page>
          <Progress>
            <ProgressFill />
          </Progress>
          <SearchForm onSubmit={(e) => e.preventDefault()}>
            <SelectBox>
              <Select defaultValue="apt">
                <option value="apt">아파트</option>
              </Select>
              <svg width="14" height="9" viewBox="0 0 14 9">
                <path d="M1.5,1.5 L7,7 L12.5,1.5" fill="none" stroke="#111" strokeWidth="2.2" />
              </svg>
            </SelectBox>
            <SearchInput defaultValue="경희궁의아침2단지" />
            <SearchButton>검색</SearchButton>
          </SearchForm>
          <Title>거래 정보</Title>
          <Rule />
          <ScrollArea>
            <Table>
              <Row>
                {HEAD.map((t) => (
                  <Cell key={t}>{t}</Cell>
                ))}
              </Row>
              <Row $last>
                {DEAL.map((t, i) => (
                  <Cell key={t} $numeric={i > 1}>
                    {t}
                  </Cell>
                ))}
              </Row>
            </Table>
            <Bar $dir="column">
              <Arrow dir="up" />
              <Arrow dir="down" />
            </Bar>
            <Bar $dir="row">
              <Arrow dir="left" />
              <Arrow dir="right" />
            </Bar>
            <Corner />
          </ScrollArea>
          <MapView />
        </Page>
        <PageBar>
          <Arrow dir="up" />
          <Thumb />
          <Arrow dir="down" color="#505050" />
        </PageBar>
      </Window>
    </>
  );
}
